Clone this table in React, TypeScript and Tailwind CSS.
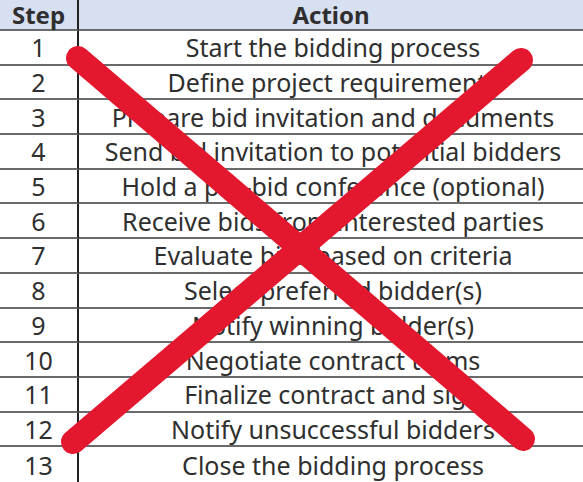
import React from "react";

const rows = [
  "Start the bidding process",
  "Define project requirements",
  "Prepare bid invitation and documents",
  "Send bid invitation to potential bidders",
  "Hold a pre-bid conference (optional)",
  "Receive bids from interested parties",
  "Evaluate bids based on criteria",
  "Select preferred bidder(s)",
  "Notify winning bidder(s)",
  "Negotiate contract terms",
  "Finalize contract and sign",
  "Notify unsuccessful bidders",
  "Close the bidding process",
];

export default function App() {
  return (
    <div
      className="relative w-[583px] h-[482px] overflow-hidden bg-white text-[#2f2f2f]"
      style={{ fontFamily: '"Noto Sans", "Open Sans", sans-serif' }}
    >
      <div className="grid grid-cols-[79px_1fr] grid-rows-[31px_repeat(13,1fr)] h-full">
        <div className="bg-[#d7e0f1] border-b-2 border-[#6a6a6a] border-r-2 border-r-[#222] flex items-center justify-center text-[24px] font-bold leading-[29px]">
          Step
        </div>
        <div className="bg-[#d7e0f1] border-b-2 border-[#6a6a6a] flex items-center justify-center text-[24px] font-bold leading-[29px]">
          Action
        </div>
        {rows.map((r, i) => (
          <React.Fragment key={i}>
            <div
              className={`border-r-2 border-r-[#222] flex items-center justify-center text-[25px] leading-[30px] ${
                i < rows.length - 1 ? "border-b-2 border-b-[#6a6a6a]" : ""
              }`}
            >
              {i + 1}
            </div>
            <div
              className={`flex items-center justify-center text-[25px] leading-[30px] pl-[4px] whitespace-nowrap ${
                i < rows.length - 1 ? "border-b-2 border-b-[#6a6a6a]" : ""
              }`}
            >
              {r}
            </div>
          </React.Fragment>
        ))}
      </div>
      <svg
        className="absolute inset-0 pointer-events-none"
        width="583"
        height="482"
        viewBox="0 0 583 482"
      >
        <line x1="78" y1="58" x2="523" y2="439" stroke="#e3182f" strokeWidth="24" strokeLinecap="round" />
        <line x1="521" y1="60" x2="73" y2="442" stroke="#e3182f" strokeWidth="24" strokeLinecap="round" />
      </svg>
    </div>
  );
}
